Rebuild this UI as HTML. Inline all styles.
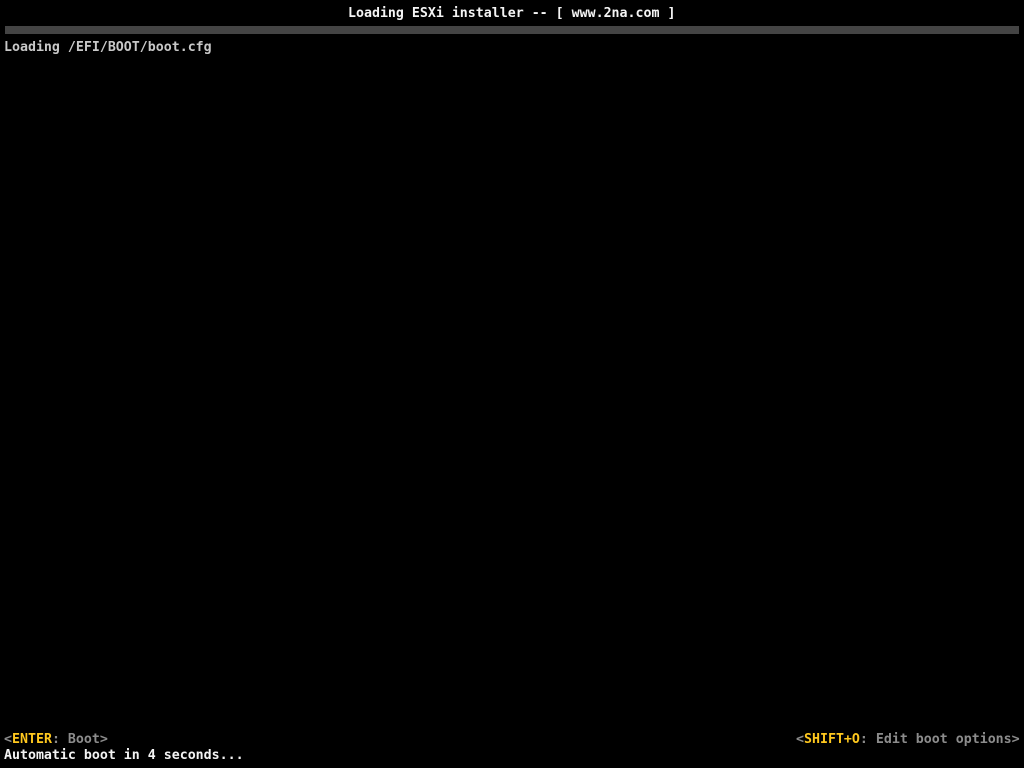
<!DOCTYPE html>
<html><head><meta charset="utf-8"><style>
html,body{margin:0;padding:0;background:#000;width:1024px;height:768px;overflow:hidden}
.t{position:absolute;font-family:"DejaVu Sans Mono","Liberation Mono",monospace;font-size:13.28px;line-height:16px;white-space:pre;font-weight:bold;letter-spacing:0}
.w{color:#f4f4f4}.g{color:#c8c8c8}.d{color:#8c8c8c}.y{color:#ffc81e}
.bar{position:absolute;left:5px;top:26px;width:1014px;height:8px;background:#444}
</style></head><body>
<div class="t w" style="left:348px;top:6px">Loading ESXi installer -- [ www.2na.com ]</div>
<div class="bar"></div>
<div class="t g" style="left:4px;top:40px">Loading /EFI/BOOT/boot.cfg</div>
<div class="t" style="left:4px;top:732px"><span class="d">&lt;</span><span class="y">ENTER</span><span class="d">: Boot&gt;</span></div>
<div class="t w" style="left:4px;top:748px">Automatic boot in 4 seconds...</div>
<div class="t" style="left:796px;top:732px"><span class="d">&lt;</span><span class="y">SHIFT+O</span><span class="d">: Edit boot options&gt;</span></div>
</body></html>
